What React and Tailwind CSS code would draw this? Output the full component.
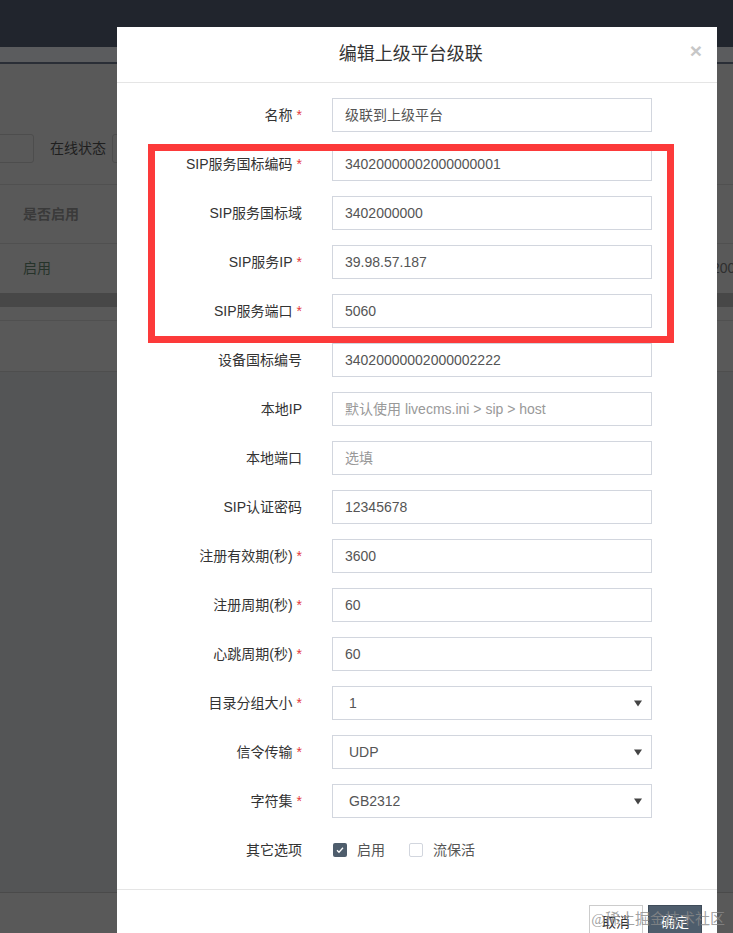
import { useState } from "react";

const font = "font-['Liberation_Sans','Noto_Sans_CJK_SC',sans-serif]";

const fields = [
  { label: "名称", value: "级联到上级平台", required: true },
  { label: "SIP服务国标编码", value: "34020000002000000001", required: true },
  { label: "SIP服务国标域", value: "3402000000" },
  { label: "SIP服务IP", value: "39.98.57.187", required: true },
  { label: "SIP服务端口", value: "5060", required: true },
  { label: "设备国标编号", value: "34020000002000002222" },
  { label: "本地IP", placeholder: "默认使用 livecms.ini > sip > host" },
  { label: "本地端口", placeholder: "选填" },
  { label: "SIP认证密码", value: "12345678" },
  { label: "注册有效期(秒)", value: "3600", required: true },
  { label: "注册周期(秒)", value: "60", required: true },
  { label: "心跳周期(秒)", value: "60", required: true },
  { label: "目录分组大小", value: "1", required: true, select: true },
  { label: "信令传输", value: "UDP", required: true, select: true },
  { label: "字符集", value: "GB2312", required: true, select: true },
];

function Label({ text, required }) {
  return (
    <div className="w-[200px] shrink-0 pr-[15px] text-right text-[14px] text-[#333]">
      {text}
      {required && <span className="ml-[4px] text-[#e4393c]">*</span>}
    </div>
  );
}

function Field({ label, value, placeholder, required, select }) {
  return (
    <div className="mb-[15px] flex h-[34px] items-center">
      <Label text={label} required={required} />
      <div className="w-[350px] px-[15px]">
        <div
          className={`flex h-[34px] items-center border border-[#d2d6de] text-[14px] ${
            select ? "pl-[16px] pr-[9px]" : "px-[12px]"
          } ${value ? "text-[#555]" : "text-[#999]"}`}
        >
          <span className="flex-1 whitespace-nowrap">{value || placeholder}</span>
          {select && (
            <svg width="8" height="8" viewBox="0 0 8 8">
              <path d="M0 1.5h8L4 7.5z" fill="#444" />
            </svg>
          )}
        </div>
      </div>
    </div>
  );
}

function Check({ checked }) {
  if (checked) {
    return (
      <span className="flex h-[14px] w-[14px] shrink-0 items-center justify-center rounded-[2px] bg-[#4e5d6c]">
        <svg width="10" height="10" viewBox="0 0 10 10">
          <path d="M2 5.2l2 2 4-4.4" fill="none" stroke="#fff" strokeWidth="1.3" />
        </svg>
      </span>
    );
  }
  return <span className="block h-[14px] w-[14px] shrink-0 rounded-[2px] border border-[#d2d6de] bg-white" />;
}

export default function App() {
  const [opts] = useState({ enable: true, keepalive: false });

  return (
    <div className={`relative h-[933px] w-[733px] overflow-hidden bg-[#595959] ${font}`}>
      {/* page under the backdrop */}
      <div className="h-[47px] bg-[#21252d]" />
      <div className="h-[17px] border-b-2 border-[#2a2e36] bg-[#5b5c5e]" />

      <div className="flex h-[120px] items-start pt-[70px]">
        <div className="-ml-[10px] h-[29px] w-[44px] rounded-[3px] border border-[#4d4d4d]" />
        <span className="ml-[16px] leading-[29px] text-[14px] text-[#1f1f1f]">在线状态</span>
        <div className="ml-[6px] h-[29px] w-[80px] rounded-[3px] border border-[#4d4d4d]" />
      </div>

      <div className="border-t border-[#505050]">
        <div className="flex h-[59px] items-center border-b border-[#505050] pl-[23px] text-[14px] font-bold text-[#3a3a3a]">
          是否启用
        </div>
        <div className="flex h-[49px] items-center text-[14px]">
          <div className="w-[712px] shrink-0 pl-[23px] text-[#26332a]">启用</div>
          <div className="whitespace-nowrap text-[#2f2f2f]">2000-01-01</div>
        </div>
        <div className="h-[14px] bg-[#474747]" />
        <div className="h-[14px] border-b border-[#505050]" />
        <div className="h-[51px] border-b border-[#4e4e4e]" />
        <div className="h-[521px] border-b border-[#4a4a4a] bg-[#545556]" />
      </div>

      {/* modal */}
      <div className="absolute left-[117px] top-[27px] w-[600px] bg-white">
        <div className="flex h-[56px] items-center border-b border-[#e5e5e5] px-[15px]">
          <h4 className="flex-1 text-center text-[18px] text-[#333]">编辑上级平台级联</h4>
          <button className="-mt-[8px] text-[21px] font-bold leading-none text-[#c7c7c7]">×</button>
        </div>

        <div className="pt-[15px] pb-[22px]">
          {fields.map((f) => (
            <Field key={f.label} {...f} />
          ))}
          <div className="flex h-[34px] items-center">
            <Label text="其它选项" />
            <div className="flex items-center px-[16px] text-[14px] text-[#555]">
              <Check checked={opts.enable} />
              <span className="ml-[10px]">启用</span>
              <span className="ml-[24px]">
                <Check checked={opts.keepalive} />
              </span>
              <span className="ml-[10px]">流保活</span>
            </div>
          </div>
        </div>

        <div className="flex justify-end gap-[5px] border-t border-[#e5e5e5] p-[15px]">
          <button className="h-[34px] border border-[#ccc] bg-white px-[12px] text-[14px] text-[#333]">
            取消
          </button>
          <button className="h-[34px] border border-[#3f4c5a] bg-[#4e5d6c] px-[12px] text-[14px] text-white">
            确定
          </button>
        </div>
      </div>

      {/* highlight box */}
      <div className="absolute left-[148px] top-[144px] h-[199px] w-[526px] border-[7px] border-[#fc3a3a]" />

      {/* watermark */}
      <div className="absolute right-[8px] top-[908px] font-['Liberation_Serif','Noto_Sans_CJK_SC',serif] text-[15px] text-[#8a8a8a]/80">
        @稀土掘金技术社区
      </div>
    </div>
  );
}
